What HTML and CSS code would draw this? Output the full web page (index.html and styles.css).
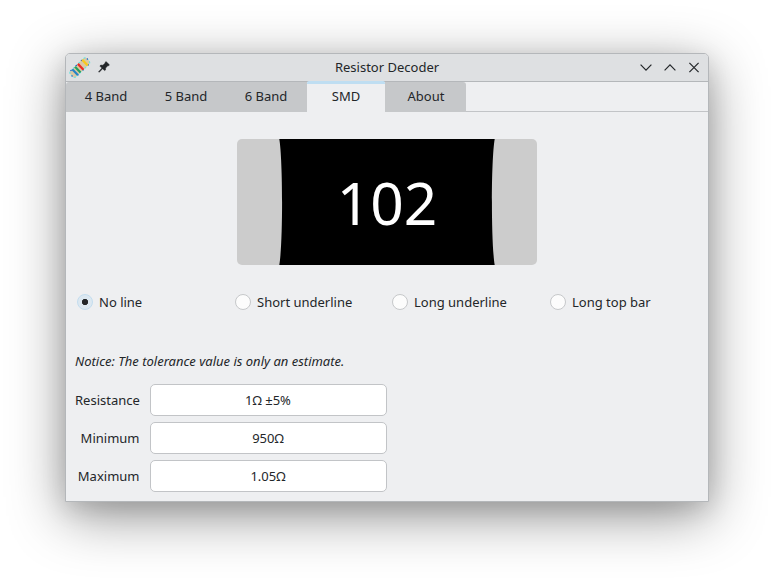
FILE: index.html
```html
<!DOCTYPE html>
<html lang="en">
<head>
<meta charset="utf-8">
<title>Resistor Decoder</title>
<link rel="stylesheet" href="styles.css">
</head>
<body>
<main class="window">
  <header class="titlebar">
    <div class="title-left">
      <svg class="app-icon" width="22" height="22" viewBox="0 0 22 22">
        <g transform="translate(10.8 10.6) rotate(-44)">
          <rect x="-11.4" y="-4" width="22.8" height="8" rx="2.5" fill="#dcc8a4"/>
          <rect x="-11.4" y="-4" width="22.8" height="8" rx="2.5" fill="none" stroke="#58e8e4" stroke-width="1" stroke-dasharray="2 1.6"/>
          <rect x="-11.4" y="-4" width="22.8" height="8" rx="2.5" fill="none" stroke="#0a12b8" stroke-width="1" stroke-dasharray="1 6.2"/>
          <path d="M-6.6 -4V4" stroke="#2484c8" stroke-width="2.2"/>
          <path d="M-2.8 -4V4" stroke="#27a060" stroke-width="2.2"/>
          <path d="M1.2 -4V4" stroke="#ee2c24" stroke-width="2.2"/>
          <path d="M7.2 -4V4" stroke="#f7c91c" stroke-width="2.4"/>
        </g>
      </svg>
      <svg class="pin" width="12" height="12" viewBox="0 0 12 12">
        <path d="M8 .6 11.4 3.8 10.6 4.8 9.8 4.7 7.6 7 7.5 9 6.6 9.6 4.6 7.7 1.2 11.3.6 10.8 3.9 7.1 1.9 5.1 2.7 4.1 4.9 4.2 7.2 2.1 7.1 1.4Z" fill="#232629" stroke="#232629" stroke-width=".5"/>
      </svg>
    </div>
    <h1 class="title">Resistor Decoder</h1>
    <div class="controls">
      <svg width="12" height="12" viewBox="0 0 12 12"><path d="M.6 2.7 6 8.1 11.4 2.7"/></svg>
      <svg width="12" height="12" viewBox="0 0 12 12"><path d="M.6 8.3 6 2.9 11.4 8.3"/></svg>
      <svg width="12" height="12" viewBox="0 0 12 12"><path d="M1.4 .9 10.6 10.1M10.6 .9 1.4 10.1"/></svg>
    </div>
  </header>
  <nav class="tabs">
    <div class="tab">4 Band</div>
    <div class="tab">5 Band</div>
    <div class="tab last-band">6 Band</div>
    <div class="tab active">SMD</div>
    <div class="tab about">About</div>
    <div class="filler"></div>
  </nav>
  <section class="page">
    <svg class="chip" width="300" height="126" viewBox="0 0 300 126">
      <rect width="300" height="126" rx="5" fill="#ccc"/>
      <path d="M42.3 0H257.7C254 22 254 104 257.7 126H42.3C46 104 46 22 42.3 0Z" fill="#000"/>
      <text x="150" y="86" class="code">102</text>
    </svg>
    <div class="options">
      <div class="option"><span class="radio checked"></span>No line</div>
      <div class="option"><span class="radio"></span>Short underline</div>
      <div class="option"><span class="radio"></span>Long underline</div>
      <div class="option"><span class="radio"></span>Long top bar</div>
    </div>
    <p class="notice">Notice: The tolerance value is only an estimate.</p>
    <div class="results">
      <span class="label">Resistance</span><div class="field">1Ω ±5%</div>
      <span class="label">Minimum</span><div class="field">950Ω</div>
      <span class="label">Maximum</span><div class="field">1.05Ω</div>
    </div>
  </section>
</main>
</body>
</html>
```
FILE: styles.css
```css
* { box-sizing: border-box; }
body {
  margin: 0;
  padding: 53px 65px 0;
  height: 579px;
  overflow: hidden;
  background: #fff;
  color: #232629;
  font: 13px/18px "Noto Sans", sans-serif;
}
.window {
  width: 644px;
  height: 449px;
  border: 1px solid #b4b7ba;
  border-radius: 5px 5px 0 0;
  background: #eeeff1;
  box-shadow: 0 14px 56px rgba(0, 0, 0, .42), 0 7px 24px rgba(0, 0, 0, .12);
}
.titlebar {
  display: grid;
  grid-template-columns: 1fr auto 1fr;
  align-items: center;
  height: 28px;
  background: #dee0e2;
  border-bottom: 1px solid #b4b7ba;
  border-radius: 4px 4px 0 0;
}
.title-left { display: flex; align-items: center; gap: 7px; padding-left: 3px; }
.app-icon, .pin { display: block; }
.pin { margin-bottom: 2px; }
.title { margin: 0 0 1px; font-size: 13px; line-height: 18px; font-weight: 400; }
.controls { display: flex; justify-content: flex-end; gap: 12px; padding-right: 8px; }
.controls path { fill: none; stroke: #232629; stroke-width: 1.2; }
.tabs { display: flex; height: 30px; }
.tab {
  width: 80px;
  padding-top: 5px;
  text-align: center;
  background: #c6c8ca;
}
.tab:first-child { border-top-left-radius: 3px; }
.last-band { width: 81px; padding-right: 1px; }
.active {
  width: 78px;
  margin-top: -1px;
  padding-top: 3px;
  background: #eeeff1;
  border-top: 3px solid #bfdef2;
  border-radius: 2px 2px 0 0;
}
.about { width: 81px; padding-left: 1px; border-top-right-radius: 3px; }
.filler { flex: 1; border-bottom: 1px solid #c2c4c7; }
.page { padding: 27px 9px 0; }
.chip { display: block; margin: 0 auto; }
.code { fill: #fff; font-size: 58.67px; text-anchor: middle; }
.options {
  display: grid;
  grid-template-columns: 158px 157px 158px 157px;
  margin: 28px 0 0 2px;
}
.option { display: flex; align-items: center; gap: 6px; }
.radio {
  width: 16px;
  height: 16px;
  border: 1px solid #c6c8ca;
  border-radius: 50%;
  background: #fcfcfc;
}
.checked {
  border-color: #c3ddef;
  background: radial-gradient(circle, #232629 2.8px, #dce8f1 3.5px);
}
.notice { margin: 41px 0 14px; font-style: italic; }
.results {
  display: grid;
  grid-template-columns: 65px 237px;
  column-gap: 10px;
  row-gap: 6px;
  align-items: center;
}
.label { padding-right: .5px; text-align: right; white-space: nowrap; }
.field {
  height: 32px;
  padding: 6px 1px 0 0;
  border: 1px solid #c2c4c7;
  border-radius: 5px;
  background: #fff;
  text-align: center;
}
```
